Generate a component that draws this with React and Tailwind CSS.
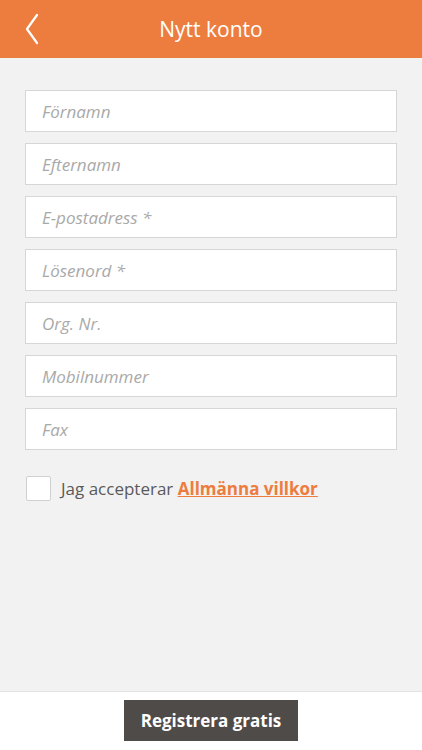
import React from 'react'

const fields = ['Förnamn', 'Efternamn', 'E-postadress *', 'Lösenord *', 'Org. Nr.', 'Mobilnummer', 'Fax']

const App = () => {
    return (
        <div className="h-[750px] w-full flex flex-col bg-[#f2f2f2] font-['Open_Sans',sans-serif]">
            {/* Header */}
            <div className="h-[58px] bg-[#ed7d3f] flex items-center relative shrink-0">
                <svg className="absolute left-[24px] top-[13px] w-[16px] h-[32px]" viewBox="0 0 16 32" fill="none" stroke="#fff" strokeWidth="2.2" strokeLinecap="round" strokeLinejoin="round">
                    <path d="M13 2 L3 16 L13 30" />
                </svg>
                <h1 className="w-full text-center text-white text-[21px] leading-none">Nytt konto</h1>
            </div>

            {/* Form */}
            <div className="flex-1 px-[25px] pt-[32px]">
                <div className="flex flex-col gap-[11px]">
                    {fields.map((f) => (
                        <input
                            key={f}
                            type="text"
                            placeholder={f}
                            className="h-[42px] w-full bg-white border border-[#d6d6d6] px-[16px] text-[17px] italic text-[#333] placeholder:text-[#a9a9a9] outline-none"
                        />
                    ))}
                </div>

                <div className="flex items-center mt-[26px] ml-[1px]">
                    <div className="w-[25px] h-[25px] bg-white border border-[#d0d0d0] rounded-[2px]" />
                    <span className="ml-[10px] text-[17px] text-[#5a5a5a]">
                        Jag accepterar{' '}
                        <a href="#" className="font-bold text-[#ed7d3f] underline">Allmänna villkor</a>
                    </span>
                </div>
            </div>

            {/* Footer */}
            <div className="h-[59px] bg-white border-t border-[#e2e2e2] flex justify-center pt-[8px] shrink-0">
                <button type="button" className="h-[41px] w-[174px] bg-[#4f4b49] text-white font-bold text-[17px]">
                    Registrera gratis
                </button>
            </div>
        </div>
    )
}

export default App
